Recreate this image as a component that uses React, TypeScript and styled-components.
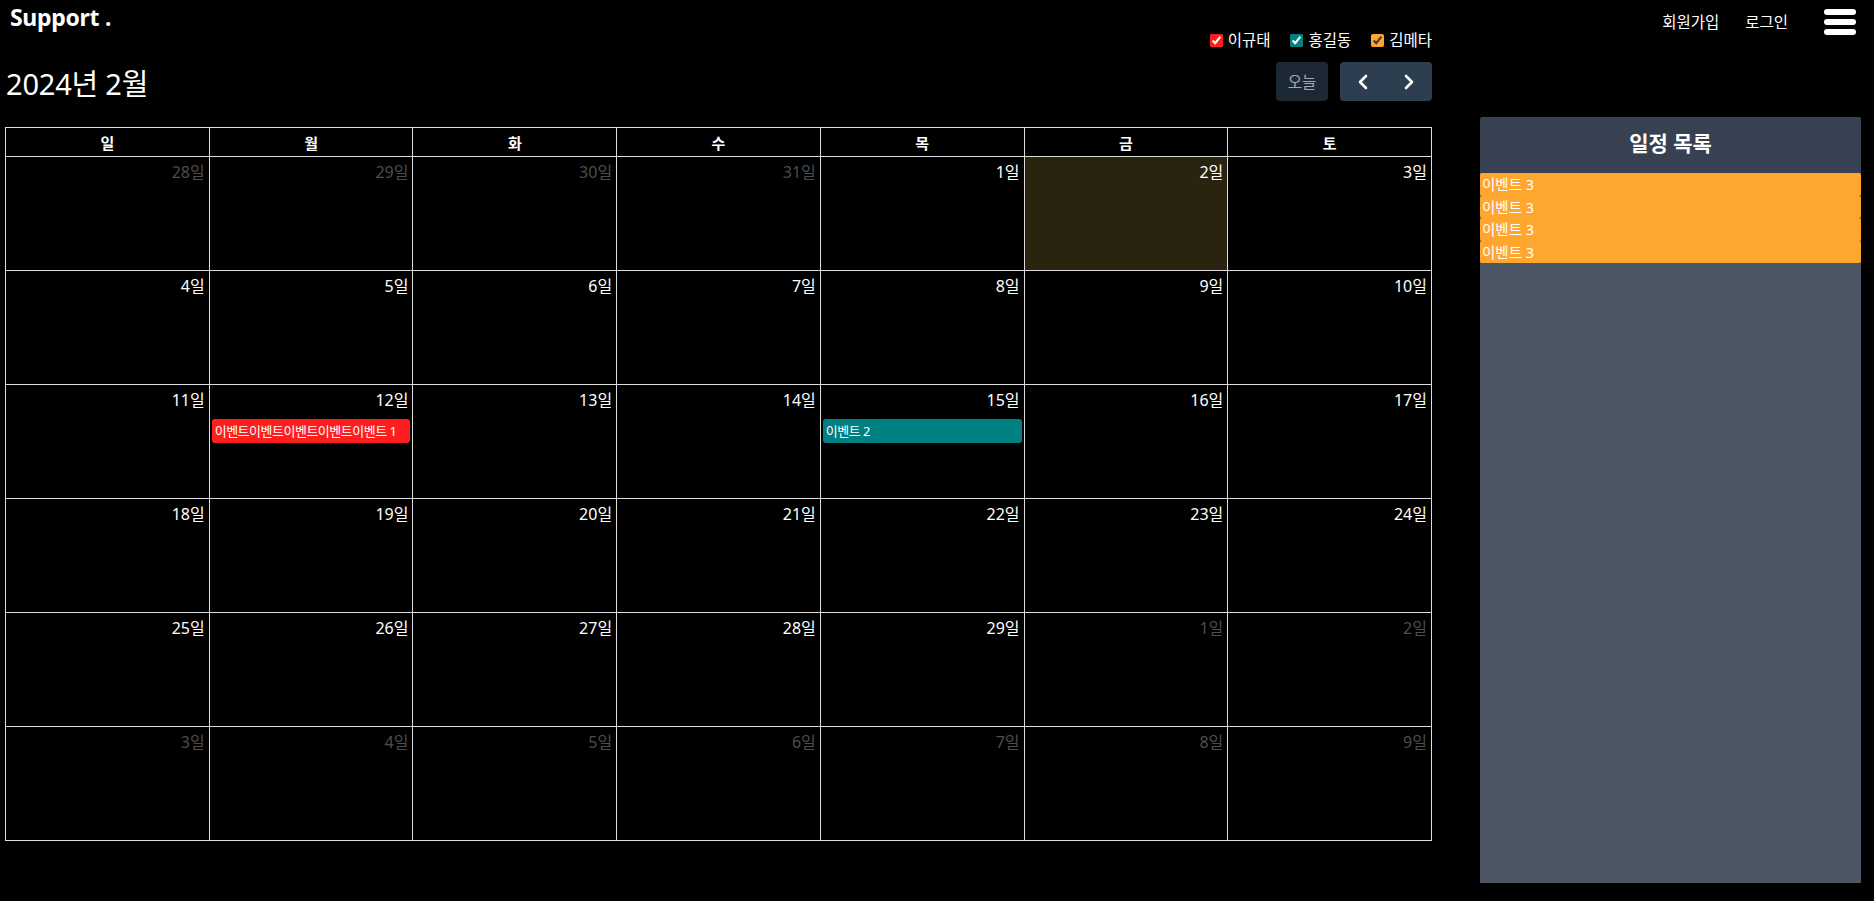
import React from 'react';
import styled, { createGlobalStyle } from 'styled-components';
import { ChevronLeft, ChevronRight } from 'lucide-react';

const GlobalStyle = createGlobalStyle`
  body {
    margin: 0;
    background: #000;
    color: #fff;
    font-family: 'Noto Sans', 'Noto Sans CJK KR', sans-serif;
  }
`;

type CalEvent = { day: number; title: string; color: string };

const members = [
  { name: '이규태', color: '#ff1e1e' },
  { name: '홍길동', color: '#008080' },
  { name: '김메타', color: '#ffa62f' },
];

const events: CalEvent[] = [
  { day: 12, title: '이벤트이벤트이벤트이벤트이벤트 1', color: '#ff1e1e' },
  { day: 15, title: '이벤트 2', color: '#008080' },
];

const weekDays = ['일', '월', '화', '수', '목', '금', '토'];
const scheduleList = ['이벤트 3', '이벤트 3', '이벤트 3', '이벤트 3'];

// 2024년 2월 보기: 1월 28일부터 42칸
const buildCells = () => {
  const cells: { day: number; current: boolean; today: boolean }[] = [];
  for (let d = 28; d <= 31; d++) cells.push({ day: d, current: false, today: false });
  for (let d = 1; d <= 29; d++) cells.push({ day: d, current: true, today: d === 2 });
  let n = 1;
  while (cells.length < 42) cells.push({ day: n++, current: false, today: false });
  return cells;
};

const Page = styled.div`
  width: 1874px;
  min-height: 901px;
`;

const TopBar = styled.header`
  display: flex;
  justify-content: space-between;
  align-items: flex-start;
  height: 30px;
  padding: 0 18px 0 10px;
`;

const Logo = styled.div`
  font-size: 23px;
  font-weight: 700;
  line-height: 34px;
  letter-spacing: -0.3px;
`;

const NavLinks = styled.nav`
  display: flex;
  align-items: flex-start;
`;

const NavLink = styled.a`
  margin-top: 11px;
  margin-left: 26px;
  font-size: 15.5px;
  line-height: 22px;
  color: #fff;
  cursor: pointer;
`;

const Hamburger = styled.div`
  display: flex;
  flex-direction: column;
  gap: 4px;
  margin-top: 9px;
  margin-left: 36px;
  width: 32px;
`;

const HamburgerBar = styled.span`
  display: block;
  height: 6px;
  border-radius: 3px;
  background: #fff;
`;

const Content = styled.main`
  display: flex;
  align-items: flex-start;
`;

const CalendarColumn = styled.section`
  width: 1427px;
  margin-left: 5px;
`;

const FilterRow = styled.div`
  display: flex;
  justify-content: flex-end;
  align-items: center;
  gap: 20px;
  height: 20px;
`;

const FilterLabel = styled.label`
  display: flex;
  align-items: center;
  gap: 5px;
  font-size: 15.5px;
  line-height: 20px;
`;

const FilterBox = styled.input<{ $color: string }>`
  margin: 0;
  width: 13px;
  height: 13px;
  accent-color: ${(p) => p.$color};
`;

const Toolbar = styled.div`
  display: flex;
  justify-content: space-between;
  align-items: center;
  margin-top: 12px;
  height: 39px;
`;

const Title = styled.h2`
  margin: 0 0 0 1px;
  font-size: 29px;
  font-weight: 400;
  letter-spacing: -0.2px;
`;

const ButtonRow = styled.div`
  display: flex;
  gap: 12px;
`;

const TodayButton = styled.button`
  width: 52px;
  height: 39px;
  border: none;
  border-radius: 4px;
  background: #2c3e50;
  opacity: 0.65;
  color: #fff;
  font-family: inherit;
  font-size: 15.5px;
  padding: 0;
`;

const NavGroup = styled.div`
  display: flex;
  border-radius: 4px;
  overflow: hidden;
`;

const NavButton = styled.button`
  display: flex;
  align-items: center;
  justify-content: center;
  width: 46px;
  height: 39px;
  border: none;
  background: #2c3e50;
  color: #fff;
  padding: 0;
`;

const Grid = styled.div`
  display: grid;
  grid-template-columns: repeat(7, 1fr);
  margin-top: 26px;
  border-top: 1px solid #ddd;
  border-left: 1px solid #ddd;
`;

const HeadCell = styled.div`
  box-sizing: border-box;
  height: 29px;
  border-right: 1px solid #ddd;
  border-bottom: 1px solid #ddd;
  display: flex;
  align-items: center;
  justify-content: center;
  font-size: 15px;
  font-weight: 700;
`;

const DayCell = styled.div<{ $today: boolean }>`
  box-sizing: border-box;
  height: 114px;
  min-width: 0;
  border-right: 1px solid #ddd;
  border-bottom: 1px solid #ddd;
  background: ${(p) => (p.$today ? '#29230f' : 'transparent')};
`;

const DayNumber = styled.div<{ $current: boolean }>`
  padding: 4px 4px 4px 0;
  text-align: right;
  font-size: 16px;
  line-height: 22px;
  color: ${(p) => (p.$current ? '#fff' : '#4d4d4d')};
`;

const EventBar = styled.div<{ $color: string }>`
  margin: 4px 2px 0 2px;
  height: 24px;
  padding: 0 3px;
  border-radius: 3px;
  background: ${(p) => p.$color};
  font-size: 13px;
  line-height: 24px;
  letter-spacing: -0.5px;
  white-space: nowrap;
  overflow: hidden;
`;

const Sidebar = styled.aside`
  display: flex;
  flex-direction: column;
  width: 381px;
  height: 766px;
  margin-top: 87px;
  margin-left: 48px;
  border-radius: 3px 3px 0 0;
  overflow: hidden;
  background: #4b5563;
`;

const SidebarHeader = styled.div`
  box-sizing: border-box;
  height: 56px;
  padding-bottom: 6px;
  display: flex;
  align-items: center;
  justify-content: center;
  background: #374151;
  font-size: 21px;
  font-weight: 700;
`;

const ScheduleItem = styled.div`
  height: 22.5px;
  padding-left: 2px;
  border-radius: 2px;
  background: #ffa62f;
  font-size: 14.5px;
  line-height: 22.5px;
`;

export default function App() {
  const cells = buildCells();
  return (
    <Page>
      <GlobalStyle />
      <TopBar>
        <Logo>Support .</Logo>
        <NavLinks>
          <NavLink>회원가입</NavLink>
          <NavLink>로그인</NavLink>
          <Hamburger>
            <HamburgerBar />
            <HamburgerBar />
            <HamburgerBar />
          </Hamburger>
        </NavLinks>
      </TopBar>
      <Content>
        <CalendarColumn>
          <FilterRow>
            {members.map((m) => (
              <FilterLabel key={m.name}>
                <FilterBox type='checkbox' defaultChecked $color={m.color} />
                {m.name}
              </FilterLabel>
            ))}
          </FilterRow>
          <Toolbar>
            <Title>2024년 2월</Title>
            <ButtonRow>
              <TodayButton disabled>오늘</TodayButton>
              <NavGroup>
                <NavButton><ChevronLeft size={24} strokeWidth={2.6} /></NavButton>
                <NavButton><ChevronRight size={24} strokeWidth={2.6} /></NavButton>
              </NavGroup>
            </ButtonRow>
          </Toolbar>
          <Grid>
            {weekDays.map((w) => <HeadCell key={w}>{w}</HeadCell>)}
            {cells.map((c, i) => (
              <DayCell key={i} $today={c.today}>
                <DayNumber $current={c.current}>{c.day}일</DayNumber>
                {c.current && events.filter((e) => e.day === c.day).map((e) => (
                  <EventBar key={e.title} $color={e.color}>{e.title}</EventBar>
                ))}
              </DayCell>
            ))}
          </Grid>
        </CalendarColumn>
        <Sidebar>
          <SidebarHeader>일정 목록</SidebarHeader>
          {scheduleList.map((s, i) => <ScheduleItem key={i}>{s}</ScheduleItem>)}
        </Sidebar>
      </Content>
    </Page>
  );
}
